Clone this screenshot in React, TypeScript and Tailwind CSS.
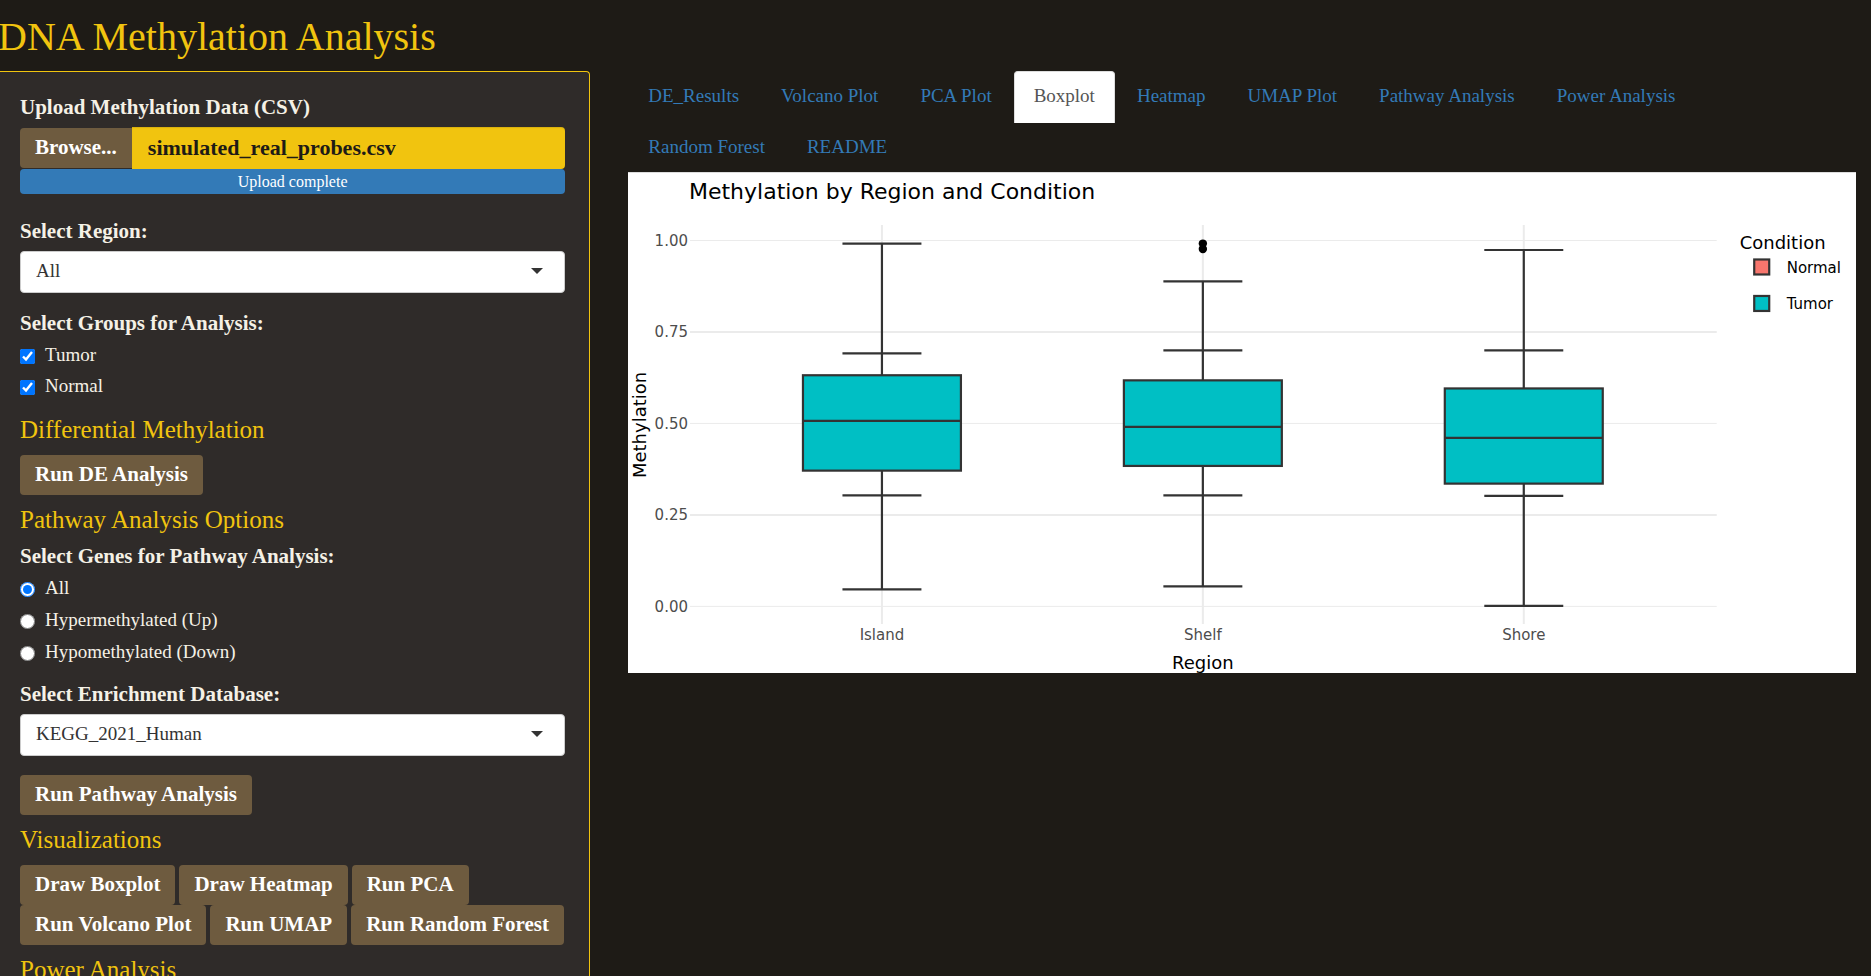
import React, { useState } from "react";

const GRID_Y = [
  { label: "1.00", y: 69 },
  { label: "0.75", y: 160 },
  { label: "0.50", y: 252 },
  { label: "0.25", y: 343 },
  { label: "0.00", y: 435 },
];

const BOXES = [
  { name: "Island", x: 254, top: 71.6, hiFence: 181.4, q3: 203.3, median: 249, q1: 298.7, loFence: 323.4, bottom: 417.4, outliers: [] as number[] },
  { name: "Shelf", x: 575, top: 109.4, hiFence: 178.4, q3: 208.4, median: 255, q1: 294, loFence: 323.4, bottom: 414.4, outliers: [71.6, 77] },
  { name: "Shore", x: 896, top: 78, hiFence: 178.4, q3: 216.5, median: 266, q1: 311.7, loFence: 324, bottom: 434, outliers: [] as number[] },
];

const TABS = [
  "DE_Results",
  "Volcano Plot",
  "PCA Plot",
  "Boxplot",
  "Heatmap",
  "UMAP Plot",
  "Pathway Analysis",
  "Power Analysis",
  "Random Forest",
  "README",
];

function BoxplotChart() {
  return (
    <svg
      viewBox="0 1 1228 500"
      className="block h-auto w-full bg-white font-['DejaVu_Sans',sans-serif]"
      role="img"
      aria-label="Methylation by Region and Condition"
    >
      <g stroke="#ebebeb">
        {GRID_Y.map((g, i) => (
          <line key={g.label} x1="62" x2="1089" y1={i % 2 ? g.y : g.y - 0.5} y2={i % 2 ? g.y : g.y - 0.5} strokeWidth={i % 2 ? 2 : 1} />
        ))}
        {BOXES.map((b) => (
          <line key={b.name} x1={b.x} x2={b.x} y1="53" y2="452" strokeWidth="2" />
        ))}
      </g>
      {BOXES.map((b) => (
        <g key={b.name} stroke="#333333" strokeWidth="2.2" fill="none">
          <path d={`M${b.x} ${b.top}V${b.q3}M${b.x} ${b.q1}V${b.bottom}`} />
          {[b.top, b.hiFence, b.loFence, b.bottom].map((y) => (
            <line key={y} x1={b.x - 39.5} x2={b.x + 39.5} y1={y} y2={y} />
          ))}
          <rect x={b.x - 79} y={b.q3} width="158" height={b.q1 - b.q3} fill="#00bfc4" />
          <line x1={b.x - 79} x2={b.x + 79} y1={b.median} y2={b.median} />
          {b.outliers.map((y) => (
            <circle key={y} cx={b.x} cy={y} r="4.2" fill="#000" stroke="none" />
          ))}
        </g>
      ))}
      <g fill="#4d4d4d" fontSize="15">
        {GRID_Y.map((g) => (
          <text key={g.label} x="60" y={g.y + 5} textAnchor="end">{g.label}</text>
        ))}
        {BOXES.map((b) => (
          <text key={b.name} x={b.x} y="468" textAnchor="middle">{b.name}</text>
        ))}
      </g>
      <g fill="#000">
        <text x="61" y="27" fontSize="22">Methylation by Region and Condition</text>
        <text x="575" y="497" fontSize="18" textAnchor="middle">Region</text>
        <text transform="translate(18 253) rotate(-90)" fontSize="18" textAnchor="middle">Methylation</text>
        <text x="1112" y="77" fontSize="18">Condition</text>
        <text x="1159" y="101" fontSize="15">Normal</text>
        <text x="1159" y="137" fontSize="15">Tumor</text>
      </g>
      <g stroke="#333333" strokeWidth="2.2">
        <rect x="1126.5" y="87.5" width="15" height="15" fill="#f8766d" />
        <rect x="1126.5" y="124" width="15" height="15" fill="#00bfc4" />
      </g>
    </svg>
  );
}

function SectionHeading({ children }: { children: React.ReactNode }) {
  return <h2 className="my-3 text-[25px] leading-[26px] text-[#f1c40f]">{children}</h2>;
}

function ActionButton({ children }: { children: React.ReactNode }) {
  return (
    <button type="button" className="h-10 cursor-pointer rounded bg-[#6e5b3f] px-[15px] text-[21px] font-bold text-white">
      {children}
    </button>
  );
}

function SelectField({ id, label, options }: { id: string; label: string; options: string[] }) {
  return (
    <div>
      <label htmlFor={id} className="mb-[7px] block text-[21px] leading-[26px] font-bold">{label}</label>
      <div className="relative">
        <select id={id} className="block h-[42px] w-full appearance-none rounded border border-[#cccccc] bg-white px-[15px] pb-0.5 text-[19px] text-[#333333]">
          {options.map((o) => (
            <option key={o}>{o}</option>
          ))}
        </select>
        <svg viewBox="0 0 12 6" className="pointer-events-none absolute top-[17px] right-[22px] h-1.5 w-3" aria-hidden="true">
          <path d="M0 0h12L6 6z" fill="#333333" />
        </svg>
      </div>
    </div>
  );
}

function Choice({ type, name, label, defaultChecked }: { type: "checkbox" | "radio"; name: string; label: string; defaultChecked?: boolean }) {
  return (
    <label className="flex items-center gap-2.5 text-[19px] leading-[26px]">
      <input type={type} name={name} defaultChecked={defaultChecked} className="mt-0.5 size-[15px]" />
      {label}
    </label>
  );
}

export default function App() {
  const [active, setActive] = useState("Boxplot");
  return (
    <div className="flex h-screen flex-col overflow-hidden bg-[#1e1b16] font-['Liberation_Serif',serif] text-[#f5f1e6]">
      <h1 className="-ml-0.5 pt-[15px] pb-3 text-[40px] leading-[44px] text-[#f1c40f]">DNA Methylation Analysis</h1>
      <div className="flex min-h-0 flex-1">
        <aside className="w-[31.55%] shrink-0 rounded-tr border-t border-r border-[#f1c40f] bg-[#2f2b29] pt-[22px] pr-6 pl-5">
          <label htmlFor="data-file" className="mb-[7px] block text-[21px] leading-[26px] font-bold">Upload Methylation Data (CSV)</label>
          <div className="flex h-[42px] items-center">
            <button type="button" className="h-10 cursor-pointer rounded-l bg-[#6e5b3f] px-[15px] text-[21px] font-bold text-white">Browse...</button>
            <input
              id="data-file"
              type="text"
              readOnly
              value="simulated_real_probes.csv"
              className="h-full min-w-0 flex-1 rounded-r bg-[#f1c40f] px-4 text-[22px] font-bold text-[#1e1b16] shadow-[inset_0_1px_1px_rgba(0,0,0,0.1)]"
            />
          </div>
          <div className="rounded bg-[#337ab7] text-center text-[16px] leading-[25px] text-white">Upload complete</div>

          <div className="mt-6">
            <SelectField id="region" label="Select Region:" options={["All", "Island", "Shelf", "Shore"]} />
          </div>

          <fieldset className="mt-[17px]">
            <legend className="text-[21px] leading-[26px] font-bold">Select Groups for Analysis:</legend>
            <div className="mt-[6px] flex flex-col gap-[5px]">
              <Choice type="checkbox" name="group" label="Tumor" defaultChecked />
              <Choice type="checkbox" name="group" label="Normal" defaultChecked />
            </div>
          </fieldset>

          <div className="mt-[18px]">
            <SectionHeading>Differential Methylation</SectionHeading>
          </div>
          <ActionButton>Run DE Analysis</ActionButton>

          <SectionHeading>Pathway Analysis Options</SectionHeading>
          <fieldset className="-mt-0.5">
            <legend className="text-[21px] leading-[26px] font-bold">Select Genes for Pathway Analysis:</legend>
            <div className="mt-[6px] flex flex-col gap-[6px]">
              <Choice type="radio" name="genes" label="All" defaultChecked />
              <Choice type="radio" name="genes" label="Hypermethylated (Up)" />
              <Choice type="radio" name="genes" label="Hypomethylated (Down)" />
            </div>
          </fieldset>

          <div className="mt-4 mb-[19px]">
            <SelectField id="database" label="Select Enrichment Database:" options={["KEGG_2021_Human"]} />
          </div>
          <ActionButton>Run Pathway Analysis</ActionButton>

          <SectionHeading>Visualizations</SectionHeading>
          <div className="flex flex-wrap gap-x-1">
            <ActionButton>Draw Boxplot</ActionButton>
            <ActionButton>Draw Heatmap</ActionButton>
            <ActionButton>Run PCA</ActionButton>
            <ActionButton>Run Volcano Plot</ActionButton>
            <ActionButton>Run UMAP</ActionButton>
            <ActionButton>Run Random Forest</ActionButton>
          </div>

          <SectionHeading>Power Analysis</SectionHeading>
        </aside>

        <main className="ml-[38px] min-w-0 flex-1 pr-[15px]">
          <nav className="-mb-px flex flex-wrap gap-x-0.5 pr-5">
            {TABS.map((t) => (
              <a
                key={t}
                href={`#${t}`}
                aria-current={t === active ? "page" : undefined}
                onClick={(e) => {
                  e.preventDefault();
                  setActive(t);
                }}
                className={
                  t === active
                    ? "-mb-px h-[52px] rounded-t border border-b-0 border-[#dddddd] bg-white px-[19px] text-[19px] leading-[48px] text-[#555555]"
                    : "h-[51px] rounded-t border border-b-0 border-transparent px-[19px] text-[19px] leading-[48px] text-[#337ab7]"
                }
              >
                {t}
              </a>
            ))}
          </nav>
          <div className="border-t border-[#dddddd]">
            <BoxplotChart />
          </div>
        </main>
      </div>
    </div>
  );
}
